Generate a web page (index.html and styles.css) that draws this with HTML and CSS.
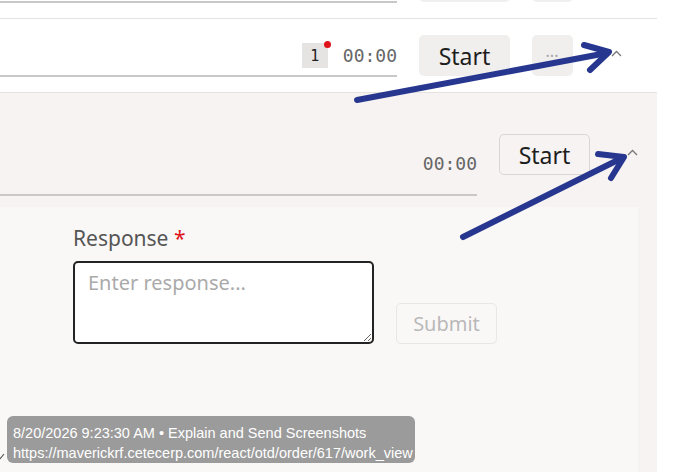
FILE: index.html
```html
<!DOCTYPE html>
<html>
<head>
<meta charset="utf-8">
<link rel="stylesheet" href="styles.css">
</head>
<body>
<div class="page">
  <div class="row row-prev">
    <div class="track">
      <span class="badge"></span>
      <span class="time-blank"></span>
    </div>
    <span class="btn btn-fill"></span>
    <span class="btn btn-more"></span>
    <span class="chev"></span>
  </div>
  <div class="row">
    <div class="track">
      <span class="badge">1<i class="dot"></i></span>
      <span class="time">00:00</span>
    </div>
    <button class="btn btn-fill">Start</button>
    <button class="btn btn-more">•••</button>
    <svg class="chev" width="11" height="7" viewBox="0 0 11 7"><polyline points="1,6 5.5,1.5 10,6" fill="none" stroke="#777" stroke-width="1.3"/></svg>
  </div>
  <div class="panel">
    <div class="panel-head">
      <div class="track2">
        <span class="time">00:00</span>
      </div>
      <button class="btn btn-outline">Start</button>
      <svg class="chev chev2" width="11" height="7" viewBox="0 0 11 7"><polyline points="1,6 5.5,1.5 10,6" fill="none" stroke="#777" stroke-width="1.3"/></svg>
    </div>
    <div class="card">
      <label class="label">Response <span class="req">*</span></label>
      <div class="form-row">
        <textarea class="input" placeholder="Enter response..."></textarea>
        <button class="btn btn-submit" disabled>Submit</button>
      </div>
    </div>
  </div>

  <svg class="marks" width="690" height="472" viewBox="0 0 690 472">
    <g stroke="#27378f" stroke-width="6" stroke-linecap="round" stroke-linejoin="round" fill="none">
      <path d="M357 100 L607 53"/>
      <path d="M584 45 L609 52 L590 70"/>
      <path d="M463 237 L622 158"/>
      <path d="M598 154 L624 157 L611 178"/>
    </g>
    <path d="M0 459 L4 454" stroke="#555" stroke-width="1.2"/>
  </svg>

  <div class="tip">
    <div>8/20/2026 9:23:30 AM • Explain and Send Screenshots</div>
    <div>https://maverickrf.cetecerp.com/react/otd/order/617/work_view</div>
  </div>
</div>
</body>
</html>
```

FILE: styles.css
```css
html, body {
  margin: 0;
  padding: 0;
  background: #ffffff;
  overflow: hidden;
}
.page {
  position: relative;
  width: 690px;
  height: 472px;
  overflow: hidden;
  font-family: "Noto Sans", "DejaVu Sans", sans-serif;
}
.row {
  width: 657px;
  height: 73px;
  display: flex;
  align-items: flex-start;
  border-bottom: 1px solid #e5e2e0;
  box-sizing: content-box;
}
.row-prev {
  margin-top: -55px;
}
.track {
  width: 397px;
  height: 25px;
  display: flex;
  justify-content: flex-end;
  align-items: center;
  gap: 15px;
  padding-top: 24px;
  padding-bottom: 7px;
  border-bottom: 2px solid #c9c8c7;
}
.badge {
  position: relative;
  width: 26px;
  height: 25px;
  background: #e6e4e2;
  font-family: "DejaVu Sans Mono", monospace;
  font-size: 15px;
  color: #222;
  display: flex;
  align-items: center;
  justify-content: center;
}
.dot {
  position: absolute;
  right: -3px;
  top: -2px;
  width: 7px;
  height: 7px;
  border-radius: 50%;
  background: #e0141b;
}
.time {
  font-family: "DejaVu Sans Mono", monospace;
  font-size: 18px;
  color: #666;
  line-height: 24px;
}
.time-blank {
  width: 54px;
  height: 24px;
}
.btn {
  display: flex;
  align-items: center;
  justify-content: center;
  font-family: "Noto Sans", "DejaVu Sans", sans-serif;
  border: none;
  border-radius: 5px;
  padding: 0;
  margin: 0;
  cursor: pointer;
}
.btn-fill {
  margin-top: 16px;
  margin-left: 22px;
  width: 91px;
  height: 41px;
  background: #f0efee;
  color: #1e1e1e;
  font-size: 23px;
}
.btn-more {
  margin-top: 16px;
  margin-left: 22px;
  width: 41px;
  height: 41px;
  background: #f0efee;
  color: #a5a5a5;
  font-size: 9px;
  letter-spacing: 1px;
}
.chev {
  display: block;
  margin-top: 31px;
  margin-left: 38px;
}
.panel {
  width: 657px;
  height: 379px;
  background: #f6f3f2;
}
.panel-head {
  display: flex;
  align-items: flex-start;
}
.track2 {
  width: 477px;
  height: 103px;
  box-sizing: border-box;
  display: flex;
  justify-content: flex-end;
  align-items: flex-end;
  padding-bottom: 18px;
  border-bottom: 2px solid #c9c8c7;
}
.btn-outline {
  margin-top: 41px;
  margin-left: 22px;
  width: 91px;
  height: 41px;
  background: transparent;
  border: 1px solid #d9d6d3;
  color: #1e1e1e;
  font-size: 23px;
}
.chev2 {
  margin-top: 56px;
  margin-left: 37px;
}
.card {
  margin-top: 11px;
  width: 638px;
  height: 270px;
  background: #faf8f7;
  padding-top: 19px;
  padding-left: 73px;
  box-sizing: border-box;
}
.label {
  display: block;
  font-size: 21px;
  line-height: 24px;
  color: #555;
  margin-bottom: 11px;
}
.req {
  color: #e0141b;
}
.form-row {
  display: flex;
  align-items: flex-end;
  gap: 22px;
}
.input {
  width: 301px;
  height: 83px;
  box-sizing: border-box;
  border: 2px solid #232323;
  border-radius: 5px;
  background: #fff;
  padding: 6px 13px;
  font-family: "Noto Sans", "DejaVu Sans", sans-serif;
  font-size: 20px;
  resize: vertical;
  margin: 0;
}
.input::placeholder {
  color: #aaa;
}
.btn-submit {
  width: 101px;
  height: 41px;
  background: transparent;
  border: 1px solid #e9e7e5;
  color: #b9b9b9;
  font-size: 20px;
}
.marks {
  position: absolute;
  left: 0;
  top: 0;
  pointer-events: none;
}
.tip {
  position: absolute;
  left: 7px;
  top: 416px;
  width: 408px;
  height: 47px;
  box-sizing: border-box;
  padding: 7px 6px;
  background: #9b9b9b;
  border-radius: 6px;
  color: #fff;
  font-family: "Liberation Sans", Arial, sans-serif;
  font-size: 14.5px;
  line-height: 20px;
  white-space: nowrap;
}
```
